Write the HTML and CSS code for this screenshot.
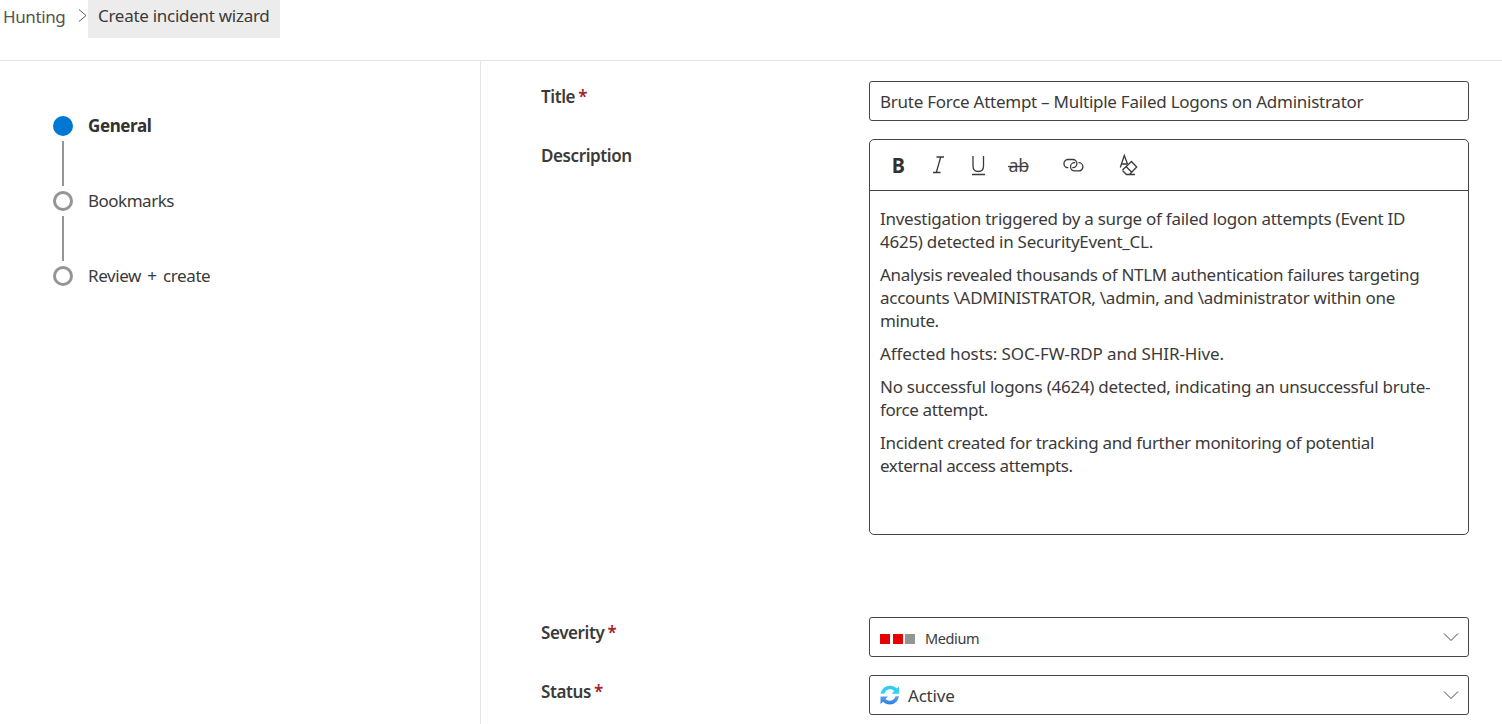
FILE: index.html
```html
<!DOCTYPE html>
<html lang="en">
<head>
<meta charset="utf-8">
<title>Create incident wizard</title>
<link rel="stylesheet" href="styles.css">
</head>
<body>
<nav class="breadcrumb">
  <a class="crumb">Hunting</a>
  <svg class="crumb-sep" width="10" height="14" viewBox="0 0 10 14"><path d="M1.5 0.500L8.500 6.500L1.5 12.500"/></svg>
  <span class="crumb-current">Create incident wizard</span>
</nav>
<main class="wizard">
  <ol class="steps">
    <li class="step active"><i class="dot"></i><span class="step-name">General</span></li>
    <li class="connector"></li>
    <li class="step"><i class="dot"></i><span class="step-name bookmarks">Bookmarks</span></li>
    <li class="connector"></li>
    <li class="step"><i class="dot"></i><span class="step-name review">Review + create</span></li>
  </ol>
  <form class="form">
    <div class="row row-title">
      <div class="label">Title <b class="req">*</b></div>
      <div class="field title-field">Brute Force Attempt – Multiple Failed Logons on Administrator</div>
    </div>
    <div class="row row-description">
      <div class="label">Description</div>
      <div class="editor">
        <div class="toolbar">
          <svg width="290" height="50" viewBox="870 140 290 50">
            <text class="tool-bold" transform="translate(891.700 172.500) scale(.9 1)">B</text>
            <path d="M936.5 157H944M933 172.500H940.5M940.7 157L936.3 172.500"/>
            <path d="M973 156V166Q973 171.500 978.300 171.500Q983.500 171.500 983.500 166V156M972 174.500H985"/>
            <text class="tool-strike" transform="translate(1008.500 172) scale(.94 1)">ab</text>
            <path d="M1008 166.500H1028.500"/>
            <path d="M1068.300 167.700A4.100 4.100 0 0 1 1067.800 159.500H1072.800A4.100 4.100 0 0 1 1072.800 167.700H1072.300M1078.500 162.700A4.100 4.100 0 0 1 1079.100 170.900H1074.600A4.100 4.100 0 0 1 1074.600 162.700H1075.200"/>
            <path d="M1120.300 167.500L1124.300 155.500L1127.500 164M1121.700 164H1127M1122.500 170L1131.500 161.500L1136.700 167L1129.500 174.500H1126.500L1122.500 170.500M1126 166.500L1132 172.500M1126 174.500H1135"/>
          </svg>
        </div>
        <div class="content">
          <p><span class="gap-m">Investigation triggered by a surge of failed logon attempts (Event ID</span><span class="gap-m">4625) detected in SecurityEvent_CL.</span></p>
          <p><span class="gap-s">Analysis revealed thousands of NTLM authentication failures targeting</span><span class="gap-m">accounts \ADMINISTRATOR, \admin, and \administrator within one</span><span>minute.</span></p>
          <p><span class="gap-l">Affected hosts: SOC-FW-RDP and SHIR-Hive.</span></p>
          <p><span class="gap-m">No successful logons (4624) detected, indicating an unsuccessful brute-</span><span>force attempt.</span></p>
          <p><span class="gap-s">Incident created for tracking and further monitoring of potential</span><span>external access attempts.</span></p>
        </div>
      </div>
    </div>
    <div class="row row-severity">
      <div class="label">Severity <b class="req">*</b></div>
      <div class="field select">
        <span class="bars"><i></i><i></i><i></i></span>
        <span class="medium">Medium</span>
        <svg class="chevron" width="16" height="10" viewBox="0 0 16 10"><path d="M1 1.500L8 8.500L15 1.500"/></svg>
      </div>
    </div>
    <div class="row">
      <div class="label">Status <b class="req">*</b></div>
      <div class="field select">
        <svg class="sync" width="20" height="20" viewBox="0 0 20 20">
          <defs>
            <linearGradient id="sync-top" x2="0" y2="1"><stop stop-color="#32c8ee"/><stop offset="1" stop-color="#32d4f5"/></linearGradient>
            <linearGradient id="sync-bottom" x2="0" y2="1"><stop stop-color="#5ea0ef"/><stop offset="1" stop-color="#2b7de0"/></linearGradient>
          </defs>
          <path fill="url(#sync-top)" d="M.500 8.800C1.500 3.800 5.500.800 10 .800C12.700.800 15 1.800 16.700 3.500L19 1.500V8.800H11.500L14.200 6C11 3 5.700 4.100 4.200 8.800Z"/>
          <path fill="url(#sync-bottom)" d="M19 11.300C18 16.500 14.300 19.500 9.800 19.500C7.200 19.500 4.800 18.500 3.100 16.800L.500 19V11.500H8L5.500 14.100C8.800 17.100 14 16.100 15.500 11.300Z"/>
        </svg>
        <span class="status">Active</span>
        <svg class="chevron" width="16" height="10" viewBox="0 0 16 10"><path d="M1 1.500L8 8.500L15 1.500"/></svg>
      </div>
    </div>
  </form>
</main>
</body>
</html>
```
FILE: styles.css
```css
* { box-sizing: border-box; }
body {
  margin: 0;
  height: 724px;
  overflow: hidden;
  background: #fff;
  color: #3b3a39;
  font: 17px/23px "Segoe UI", "Noto Sans", "Open Sans", sans-serif;
  letter-spacing: -0.4px;
  white-space: nowrap;
}
svg { display: block; flex: none; }
.breadcrumb { display: flex; height: 61px; border-bottom: 1px solid #e5e5e5; }
.crumb { width: 77px; padding: 5px 0 0 3px; color: #55534f; }
.crumb-sep { margin-top: 9px; width: 11px; fill: none; stroke: #605e5c; }
.crumb-current { width: 192px; height: 38px; padding: 4px 0 0 10px; background: #ececec; letter-spacing: -0.28px; }
.wizard { display: flex; height: 663px; }
.steps { width: 481px; margin: 0; padding: 50px 0 0 53px; border-right: 1px solid #e5e5e5; list-style: none; flex: none; }
.step { display: flex; align-items: center; gap: 15px; height: 30px; }
.step-name { padding-bottom: 2px; }
.dot { width: 20px; height: 20px; border: 3px solid #979593; border-radius: 50%; }
.active .dot { background: #0078d4; border-color: #0078d4; }
.active .step-name { font-weight: 700; color: #323130; }
.bookmarks { letter-spacing: -0.5px; }
.review { word-spacing: 2.300px; }
.connector { width: 2px; height: 45px; margin-left: 9px; background: #979593; }
.form { padding: 20px 0 0 60px; }
.row { display: grid; grid-template-columns: 328px 600px; margin-bottom: 18px; }
.row-title .label, .row-severity .label { padding-top: 4px; }
.row-description { margin-bottom: 82px; }
.label { padding: 5px 0 0; font-weight: 600; }
.req { margin-left: -1px; color: #a4262c; font-weight: 600; }
.field { height: 40px; padding: 8px 10px; border: 1px solid #484644; border-radius: 3px; }
.title-field, .gap-m { letter-spacing: -0.26px; }
.gap-s { letter-spacing: -0.3px; }
.gap-l { letter-spacing: -0.1px; }
.editor { height: 396px; border: 1px solid #484644; border-radius: 5px; }
.toolbar { height: 51px; border-bottom: 1px solid #484644; }
.toolbar path { fill: none; stroke: #3b3a39; stroke-width: 1.300; }
.tool-bold { font-size: 22px; font-weight: 700; fill: #323130; }
.tool-strike { font-size: 19px; fill: #484644; }
.content { padding: 16px 10px; }
.content p { margin: 0 0 10px; }
.content span { display: block; width: max-content; }
.select { display: flex; align-items: center; }
.bars { display: flex; gap: 2.500px; margin: 4px 10px 0 0; }
.bars i { width: 10px; height: 10px; background: #e60000; }
.bars i:last-child { background: #949494; }
.medium { padding-top: 2px; font-size: 14.500px; }
.sync { margin-right: 8px; }
.status { letter-spacing: -0.2px; }
.chevron { margin-left: auto; margin-right: -1px; fill: none; stroke: #484644; }
```
